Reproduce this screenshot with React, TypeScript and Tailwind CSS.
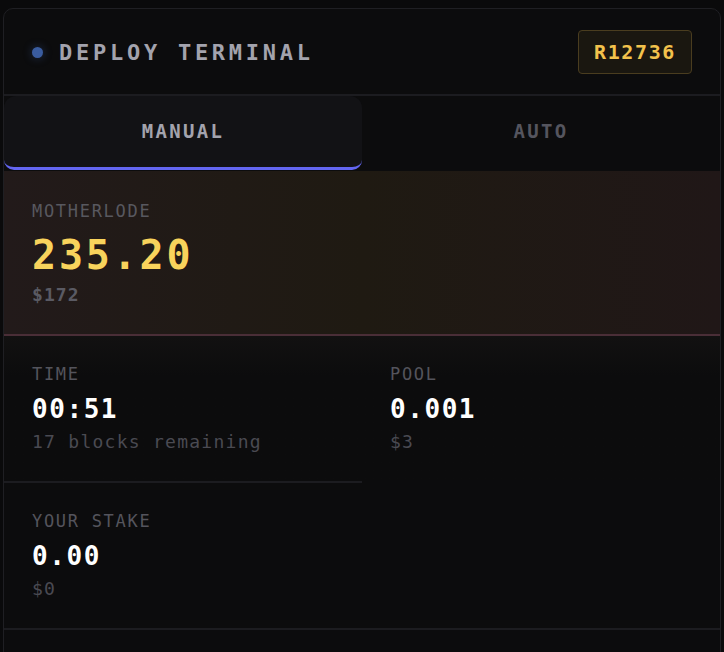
import { useState } from "react";

const MONO = { fontFamily: "'DejaVu Sans Mono', 'Liberation Mono', monospace" };

function Stat({
  label,
  value,
  sub,
  className = "",
}: {
  label: string;
  value: string;
  sub: string;
  className?: string;
}) {
  return (
    <div className={`pt-[26px] pb-[25px] px-7 ${className}`}>
      <div className="text-[17px] leading-6 tracking-[0.1em] text-[#54545c]">{label}</div>
      <div className="mt-[7px] text-[26px] leading-8 font-bold tracking-[0.06em] text-white">
        {value}
      </div>
      <div className="mt-[3px] text-[18px] leading-7 tracking-[0.07em] text-[#4a4a52]">{sub}</div>
    </div>
  );
}

export default function App() {
  const [tab, setTab] = useState<"manual" | "auto">("manual");

  return (
    <div className="min-h-screen bg-[#0a0a0b] pl-[3px] pt-2 overflow-hidden" style={MONO}>
      <div className="w-[718px] rounded-t-[10px] border border-[#1f1f23] bg-[#0c0c0d]">
        {/* Header */}
        <div className="h-[87px] px-7 flex items-center justify-between border-b-2 border-[#1c1c20]">
          <div className="flex items-center gap-[16px] pt-[2px]">
            <span className="w-[11px] h-[11px] rounded-full bg-[#3a5c9f] shadow-[0_0_10px_rgba(58,92,159,0.45)]" />
            <span className="text-[22px] font-bold tracking-[0.17em] text-[#a3a3ad]">
              DEPLOY TERMINAL
            </span>
          </div>
          <div className="h-[44px] w-[114px] flex items-center justify-center rounded-[4px] border border-[#4a3d1f] bg-[#1a1710] text-[20px] font-bold tracking-[0.08em] text-[#f2c24c]">
            R12736
          </div>
        </div>

        {/* Tabs */}
        <div className="grid grid-cols-2 h-[75px] pb-[1px]">
          {(["manual", "auto"] as const).map((t) => (
            <button
              key={t}
              type="button"
              onClick={() => setTab(t)}
              className={`flex items-center justify-center text-[19px] font-bold tracking-[0.12em] border-b-[3px] ${
                tab === t
                  ? "bg-[#121215] text-[#a3a3ad] rounded-t-[12px] rounded-b-[10px] border-[#6366f1]"
                  : "text-[#55555e] border-transparent"
              }`}
            >
              {t.toUpperCase()}
            </button>
          ))}
        </div>

        {/* Motherlode */}
        <div className="pt-[28px] pb-[25px] px-7 border-b-2 border-[#4a2e37] bg-gradient-to-r from-[#221a1a] via-[#1f1a12] to-[#201717]">
          <div className="text-[17px] leading-6 tracking-[0.1em] text-[#58585f]">MOTHERLODE</div>
          <div className="mt-3 text-[40px] leading-10 font-bold tracking-[0.07em] text-[#f8d35c]">
            235.20
          </div>
          <div className="mt-[6px] text-[18px] leading-7 font-semibold tracking-[0.06em] text-[#5a5a63]">
            $172
          </div>
        </div>

        {/* Stats */}
        <div className="grid grid-cols-2 bg-gradient-to-b from-[#121111] to-[#0c0c0d] to-[40px]">
          <Stat
            label="TIME"
            value="00:51"
            sub="17 blocks remaining"
            className="border-b-2 border-[#1c1c20]"
          />
          <Stat label="POOL" value="0.001" sub="$3" />
        </div>
        <div className="grid grid-cols-2">
          <Stat label="YOUR STAKE" value="0.00" sub="$0" />
        </div>
        <div className="h-[80px] border-t-2 border-[#1c1c20]" />
      </div>
    </div>
  );
}
